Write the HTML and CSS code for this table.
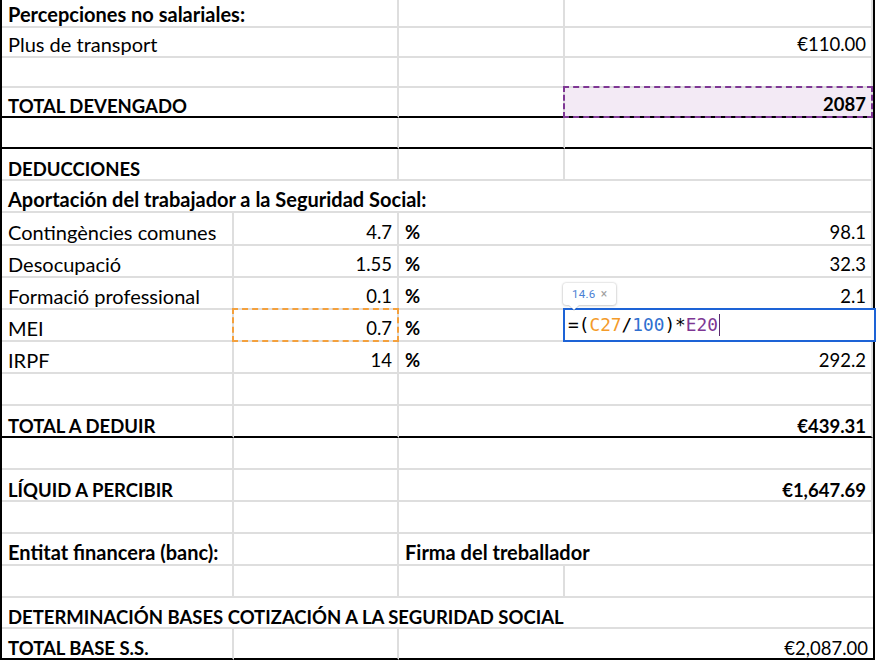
FILE: index.html
```html
<!DOCTYPE html>
<html lang="es">
<head>
<meta charset="utf-8">
<title>Nòmina</title>
<link rel="stylesheet" href="styles.css">
</head>
<body>
<div class="sheet">
  <!-- row 1 -->
  <div class="cell b span2">Percepciones no salariales:</div>
  <div class="cell"></div>
  <div class="cell"></div>
  <!-- row 2 -->
  <div class="cell">Plus de transport</div>
  <div class="cell"></div>
  <div class="cell"></div>
  <div class="cell num">€110.00</div>
  <!-- row 3 -->
  <div class="cell"></div><div class="cell"></div><div class="cell"></div><div class="cell"></div>
  <!-- row 4 -->
  <div class="cell b caps thick">TOTAL DEVENGADO</div>
  <div class="cell thick"></div>
  <div class="cell thick"></div>
  <div class="cell b num thick copied">2087<span class="ant purple"></span></div>
  <!-- row 5 -->
  <div class="cell thick"></div><div class="cell thick"></div><div class="cell thick"></div><div class="cell thick"></div>
  <!-- row 6 -->
  <div class="cell b caps">DEDUCCIONES</div>
  <div class="cell"></div><div class="cell"></div><div class="cell"></div>
  <!-- row 7 -->
  <div class="cell b span3">Aportación del trabajador a la Seguridad Social:</div>
  <div class="cell"></div>
  <!-- row 8 -->
  <div class="cell">Contingències comunes</div>
  <div class="cell num">4.7</div>
  <div class="cell b pct">%</div>
  <div class="cell num">98.1</div>
  <!-- row 9 -->
  <div class="cell">Desocupació</div>
  <div class="cell num">1.55</div>
  <div class="cell b pct">%</div>
  <div class="cell num">32.3</div>
  <!-- row 10 -->
  <div class="cell">Formació professional</div>
  <div class="cell num">0.1</div>
  <div class="cell b pct">%</div>
  <div class="cell num">2.1</div>
  <!-- row 11 -->
  <div class="cell">MEI</div>
  <div class="cell num">0.7<span class="ant orange"></span></div>
  <div class="cell b pct">%</div>
  <div class="cell editing">
    <div class="tip"><span class="tip-val">14.6</span><span class="tip-x">×</span></div>
    <div class="formula"><span>=(</span><span class="ref-o">C27</span><span>/</span><span class="ref-n">100</span><span>)*</span><span class="ref-p">E20</span><span class="caret"></span></div>
  </div>
  <!-- row 12 -->
  <div class="cell">IRPF</div>
  <div class="cell num">14</div>
  <div class="cell b pct">%</div>
  <div class="cell num">292.2</div>
  <!-- row 13 -->
  <div class="cell"></div><div class="cell"></div><div class="cell"></div><div class="cell"></div>
  <!-- row 14 -->
  <div class="cell b caps thick">TOTAL A DEDUIR</div>
  <div class="cell thick"></div>
  <div class="cell thick"></div>
  <div class="cell b num total thick">€439.31</div>
  <!-- row 15 -->
  <div class="cell"></div><div class="cell"></div><div class="cell"></div><div class="cell"></div>
  <!-- row 16 -->
  <div class="cell b caps">LÍQUID A PERCIBIR</div>
  <div class="cell"></div>
  <div class="cell"></div>
  <div class="cell b num total">€1,647.69</div>
  <!-- row 17 -->
  <div class="cell"></div><div class="cell"></div><div class="cell"></div><div class="cell"></div>
  <!-- row 18 -->
  <div class="cell b">Entitat financera (banc):</div>
  <div class="cell"></div>
  <div class="cell b span2">Firma del treballador</div>
  <!-- row 19 -->
  <div class="cell"></div><div class="cell"></div><div class="cell"></div><div class="cell"></div>
  <!-- row 20 -->
  <div class="cell b caps span4">DETERMINACIÓN BASES COTIZACIÓN A LA SEGURIDAD SOCIAL</div>
  <!-- row 21 -->
  <div class="cell b caps thick">TOTAL BASE S.S.</div>
  <div class="cell thick"></div>
  <div class="cell thick"></div>
  <div class="cell num total thick">€2,087.00</div>
</div>
</body>
</html>
```

FILE: styles.css
```css
html, body {
  margin: 0;
  padding: 0;
  background: #ffffff;
}

body {
  width: 877px;
  height: 662px;
  overflow: hidden;
  font-family: Lato, "Open Sans", sans-serif;
  font-size: 20px;
  color: #000000;
}

.sheet {
  width: 875px;
  box-sizing: border-box;
  border-left: 2px solid #000;
  border-right: 2px solid #000;
  display: grid;
  grid-template-columns: 232px 165px 166px 308px;
  grid-template-rows: 28px 30px 30px 30px 31px 32px 32px 33px 32px 32px 32px 32px 32px 32px 32px 32px 32px 32px 32px 31px 31px;
}

.cell {
  position: relative;
  box-sizing: border-box;
  border-right: 2px solid #dedede;
  border-bottom: 2px solid #dedede;
  display: flex;
  align-items: flex-end;
  padding: 0 5px 0 6px;
  white-space: nowrap;
  line-height: 23px;
}

.cell:nth-child(4n) {
  border-right: none;
}

.sheet > .cell:last-child {
  border-right: none;
}

.b { font-weight: 700; }

.caps,
.num,
.pct { font-size: 18.5px; }

.caps,
.num.total { line-height: 20px; }

.num { justify-content: flex-end; }

.span2 { grid-column: span 2; }
.span3 { grid-column: span 3; }
.span4 { grid-column: span 4; border-right: none; }

.thick { border-bottom-color: #000; }

.copied { background: #f3eaf5; }

.ant {
  position: absolute;
  top: -2px;
  left: -2px;
  right: -2px;
  bottom: -2px;
  border: 2px dashed;
  pointer-events: none;
}

.ant.purple { border-color: #7e3794; }
.ant.orange { border-color: #f4a03c; }

.editing {
  border-right: none;
  overflow: visible;
}

.formula {
  position: absolute;
  top: -2px;
  left: -2px;
  right: -3px;
  bottom: -2px;
  border: 2px solid #1d63d6;
  background: #fff;
  font-family: "DejaVu Sans Mono", monospace;
  font-size: 17.8px;
  line-height: 30px;
  padding-left: 3px;
  display: flex;
  align-items: center;
  z-index: 2;
}

.ref-o { color: #f49b2a; }
.ref-n { color: #2f6fd0; }
.ref-p { color: #7e3794; }

.caret {
  display: inline-block;
  width: 1px;
  height: 22px;
  background: #5b2a6e;
  margin-left: 1px;
}

.tip {
  position: absolute;
  left: -2px;
  top: -27px;
  width: 53px;
  height: 22px;
  box-sizing: border-box;
  background: #fff;
  border-radius: 3px;
  box-shadow: 0 0 2px rgba(0,0,0,0.25), 0 1px 3px rgba(0,0,0,0.15);
  display: flex;
  align-items: center;
  padding-left: 9px;
  gap: 5px;
  font-family: Roboto, "Noto Sans", sans-serif;
  font-size: 11.5px;
  z-index: 3;
}

.tip::after {
  content: "";
  position: absolute;
  left: 6px;
  bottom: -5px;
  width: 0;
  height: 0;
  border-left: 5px solid transparent;
  border-right: 5px solid transparent;
  border-top: 5px solid #fff;
  filter: drop-shadow(0 1px 0 rgba(0,0,0,0.15));
}

.tip-val { color: #4a7fd4; letter-spacing: 0.3px; }
.tip-x { color: #a0a0a0; font-size: 12px; }
```
